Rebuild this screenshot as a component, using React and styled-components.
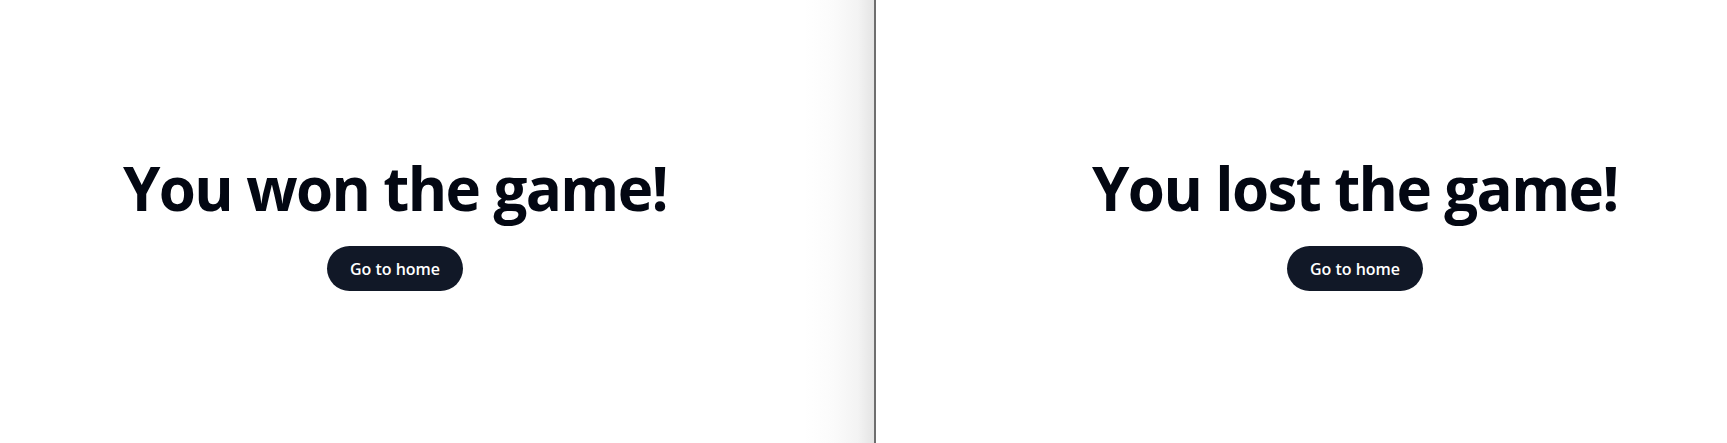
import React from "react";
import styled, { createGlobalStyle } from "styled-components";

const GlobalStyle = createGlobalStyle`
  html, body {
    margin: 0;
    padding: 0;
    background: #fff;
  }
  body {
    font-family: "Open Sans", "Noto Sans", sans-serif;
  }
`;

function ResultScreen({ won, side }) {
  return (
    <Panel $side={side}>
      <Heading>{won ? "You won the game!" : "You lost the game!"}</Heading>
      <HomeButton type="button">Go to home</HomeButton>
    </Panel>
  );
}

function App() {
  return (
    <>
      <GlobalStyle />
      <Split>
        <ResultScreen won side="left" />
        <Divider />
        <ResultScreen won={false} side="right" />
      </Split>
    </>
  );
}

const Split = styled.main`
  display: flex;
  width: 100%;
  height: 443px;
  overflow: hidden;
`;

const Panel = styled.section`
  display: flex;
  flex-direction: column;
  align-items: center;
  justify-content: center;
  gap: 28px;
  box-sizing: border-box;
  padding-top: 6px;
  ${({ $side }) =>
    $side === "left"
      ? `
    width: 874px;
    flex-shrink: 0;
    padding-right: 84px;
    background: linear-gradient(
      to right,
      #ffffff 0,
      #ffffff calc(100% - 70px),
      #fbfbfb calc(100% - 40px),
      #f3f3f3 calc(100% - 16px),
      #e4e4e4 100%
    );
  `
      : `
    flex: 1;
    padding-left: 107px;
  `}
`;

const Divider = styled.div`
  width: 2px;
  flex-shrink: 0;
  background: #6e6e6e;
`;

const Heading = styled.h1`
  margin: 0;
  font-size: 60px;
  line-height: 1;
  font-weight: 700;
  letter-spacing: -1.6px;
  color: #030712;
  white-space: nowrap;
`;

const HomeButton = styled.button`
  border: none;
  border-radius: 9999px;
  background: #111827;
  color: #fff;
  font-family: inherit;
  font-size: 16px;
  font-weight: 600;
  height: 45px;
  padding: 0 23px;
  cursor: pointer;
`;

export default App;
